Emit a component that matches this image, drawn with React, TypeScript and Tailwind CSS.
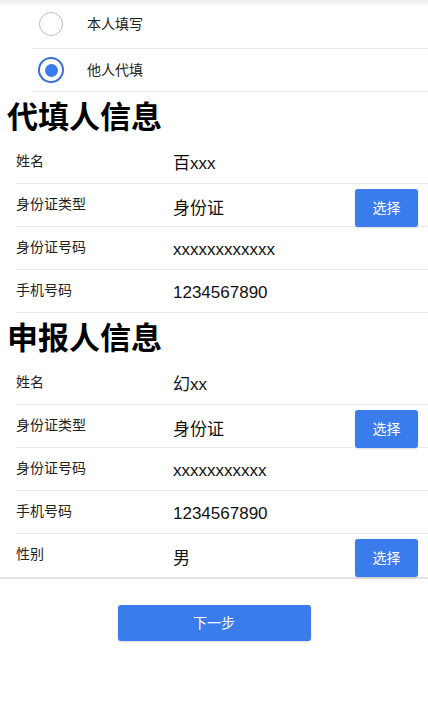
import React from 'react'

type Field = { label: string; value: string; select?: boolean }

const agentFields: Field[] = [
    { label: '姓名', value: '百xxx' },
    { label: '身份证类型', value: '身份证', select: true },
    { label: '身份证号码', value: 'xxxxxxxxxxxx' },
    { label: '手机号码', value: '1234567890' },
]

const applicantFields: Field[] = [
    { label: '姓名', value: '幻xx' },
    { label: '身份证类型', value: '身份证', select: true },
    { label: '身份证号码', value: 'xxxxxxxxxxx' },
    { label: '手机号码', value: '1234567890' },
    { label: '性别', value: '男', select: true },
]

function Radio({ checked, label, first }: { checked?: boolean; label: string; first?: boolean }) {
    return (
        <div className={first ? 'flex items-center h-[49px] border-b border-[#ebebeb]' : 'flex items-center h-[43px] border-b border-[#ebebeb]'}>
            {checked ? (
                <span className="ml-[6px] w-[26px] h-[26px] rounded-full border-2 border-[#3b6fd2] flex items-center justify-center">
                    <span className="w-[13px] h-[13px] rounded-full bg-[#3a7cec]" />
                </span>
            ) : (
                <span className="ml-[7px] w-[24px] h-[24px] rounded-full border border-[#bdbdbd]" />
            )}
            <span className={checked ? 'ml-[23px] text-[14px] text-[#222]' : 'ml-[24px] text-[14px] text-[#222]'}>{label}</span>
        </div>
    )
}

function Row({ field, last }: { field: Field; last?: boolean }) {
    return (
        <div className={last ? 'flex h-[43px]' : 'flex h-[43px] border-b border-[#ebebeb]'}>
            <div className="w-[157px] pt-[10px] text-[14px] leading-[20px] text-[#222]">{field.label}</div>
            <div className={field.select ? 'self-center pt-[7px] text-[17px] text-[#111]' : 'self-center pt-[3px] text-[17px] text-[#111]'}>
                {field.value}
            </div>
            {field.select && (
                <button className="ml-auto mr-[10px] mt-[5px] w-[63px] h-[38px] rounded-[3px] bg-[#3a7cec] text-white text-[14px] shadow-[0_1px_2px_rgba(0,0,0,0.15)]">
                    选择
                </button>
            )}
        </div>
    )
}

export default function App() {
    return (
        <div className="w-[428px] min-h-[702px] bg-white font-['Liberation_Sans','Noto_Sans_CJK_SC',sans-serif]">
            <div className="pl-[32px] bg-[linear-gradient(#ececec,#ffffff_6px)]">
                <Radio label="本人填写" first />
                <Radio label="他人代填" checked />
            </div>

            <h1 className="h-[49px] pl-[7px] pt-[2px] text-[31px] leading-[47px] font-bold text-black">代填人信息</h1>
            <div className="pl-[16px]">
                {agentFields.map((f) => (
                    <Row key={f.label} field={f} />
                ))}
            </div>

            <h1 className="h-[49px] pl-[7px] pt-[2px] text-[31px] leading-[47px] font-bold text-black">申报人信息</h1>
            <div className="pl-[1px] border-b-2 border-[#e4e4e4]">
                <div className="pl-[15px]">
                    {applicantFields.map((f, i) => (
                        <Row key={f.label} field={f} last={i === applicantFields.length - 1} />
                    ))}
                </div>
            </div>

            <div className="pt-[26px]">
                <button className="block mx-auto w-[193px] h-[36px] rounded-[3px] bg-[#3a7cec] text-white text-[14px] shadow-[0_1px_2px_rgba(0,0,0,0.15)]">
                    下一步
                </button>
            </div>
        </div>
    )
}
